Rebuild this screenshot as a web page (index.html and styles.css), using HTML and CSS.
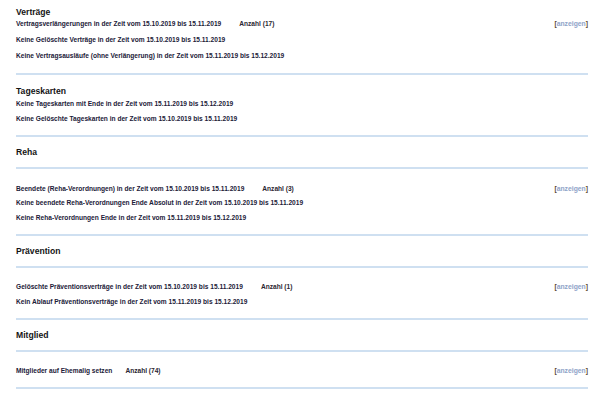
FILE: index.html
```html
<!DOCTYPE html>
<html lang="de">
<head>
<meta charset="utf-8">
<title>Übersicht</title>
<link rel="stylesheet" href="styles.css">
</head>
<body>
<div class="page">
  <h2 class="title first">Verträge</h2>
  <div class="rows wide">
    <div class="row"><span class="txt">Vertragsverlängerungen in der Zeit vom 15.10.2019 bis 15.11.2019<span class="count">Anzahl (17)</span></span><span class="link">[<a>anzeigen</a>]</span></div>
    <div class="row"><span class="txt">Keine Gelöschte Verträge in der Zeit vom 15.10.2019 bis 15.11.2019</span></div>
    <div class="row"><span class="txt">Keine Vertragsausläufe (ohne Verlängerung) in der Zeit vom 15.11.2019 bis 15.12.2019</span></div>
  </div>
  <div class="rule"></div>

  <h2 class="title spaced">Tageskarten</h2>
  <div class="rows medium">
    <div class="row"><span class="txt">Keine Tageskarten mit Ende in der Zeit vom 15.11.2019 bis 15.12.2019</span></div>
    <div class="row"><span class="txt">Keine Gelöschte Tageskarten in der Zeit vom 15.10.2019 bis 15.11.2019</span></div>
  </div>
  <div class="rule"></div>

  <h2 class="title">Reha</h2>
  <div class="rule"></div>
  <div class="rows">
    <div class="row"><span class="txt">Beendete (Reha-Verordnungen) in der Zeit vom 15.10.2019 bis 15.11.2019<span class="count">Anzahl (3)</span></span><span class="link">[<a>anzeigen</a>]</span></div>
    <div class="row"><span class="txt">Keine beendete Reha-Verordnungen Ende Absolut in der Zeit vom 15.10.2019 bis 15.11.2019</span></div>
    <div class="row"><span class="txt">Keine Reha-Verordnungen Ende in der Zeit vom 15.11.2019 bis 15.12.2019</span></div>
  </div>
  <div class="rule"></div>

  <h2 class="title">Prävention</h2>
  <div class="rule"></div>
  <div class="rows">
    <div class="row"><span class="txt">Gelöschte Präventionsverträge in der Zeit vom 15.10.2019 bis 15.11.2019<span class="count">Anzahl (1)</span></span><span class="link">[<a>anzeigen</a>]</span></div>
    <div class="row"><span class="txt">Kein Ablauf Präventionsverträge in der Zeit vom 15.11.2019 bis 15.12.2019</span></div>
  </div>
  <div class="rule"></div>

  <h2 class="title">Mitglied</h2>
  <div class="rule"></div>
  <div class="rows">
    <div class="row"><span class="txt">Mitglieder auf Ehemalig setzen<span class="count short">Anzahl (74)</span></span><span class="link">[<a>anzeigen</a>]</span></div>
  </div>
  <div class="rule"></div>
</div>
</body>
</html>
```
FILE: styles.css
```css
html, body {
  margin: 0;
  padding: 0;
  background: #ffffff;
}

.page {
  padding: 8px 17px 0 16px;
  font-family: "Liberation Sans", Arial, sans-serif;
  color: #1b2038;
}

.title {
  margin: 11px 0 0 0;
  font-size: 8.6px;
  font-weight: bold;
  line-height: 8px;
  color: #141414;
}

.title.first {
  margin-top: 0;
}

.title.spaced {
  margin-top: 12px;
}

.rows {
  margin: 0;
}

.title + .rows {
  margin-top: 1px;
}

.title.first + .rows {
  margin-top: 0;
}

.rule + .rows {
  margin-top: 11.5px;
}

.row {
  display: flex;
  justify-content: space-between;
  align-items: center;
  height: 14.5px;
  font-size: 6.6px;
  font-weight: bold;
  white-space: nowrap;
}

.rows.wide .row {
  height: 15.8px;
}

.rows.medium .row {
  height: 15px;
}

.count {
  margin-left: 18px;
  color: #2a2530;
}

.count.short {
  margin-left: 13px;
}

.link {
  color: #5c4630;
  font-size: 6.8px;
}

.link a {
  color: #8fa3c8;
  text-decoration: none;
}

.rule {
  height: 2px;
  background: #cfe0f1;
}

.rows + .rule {
  margin-top: 9.5px;
}

.title + .rule {
  margin-top: 11px;
}
```
